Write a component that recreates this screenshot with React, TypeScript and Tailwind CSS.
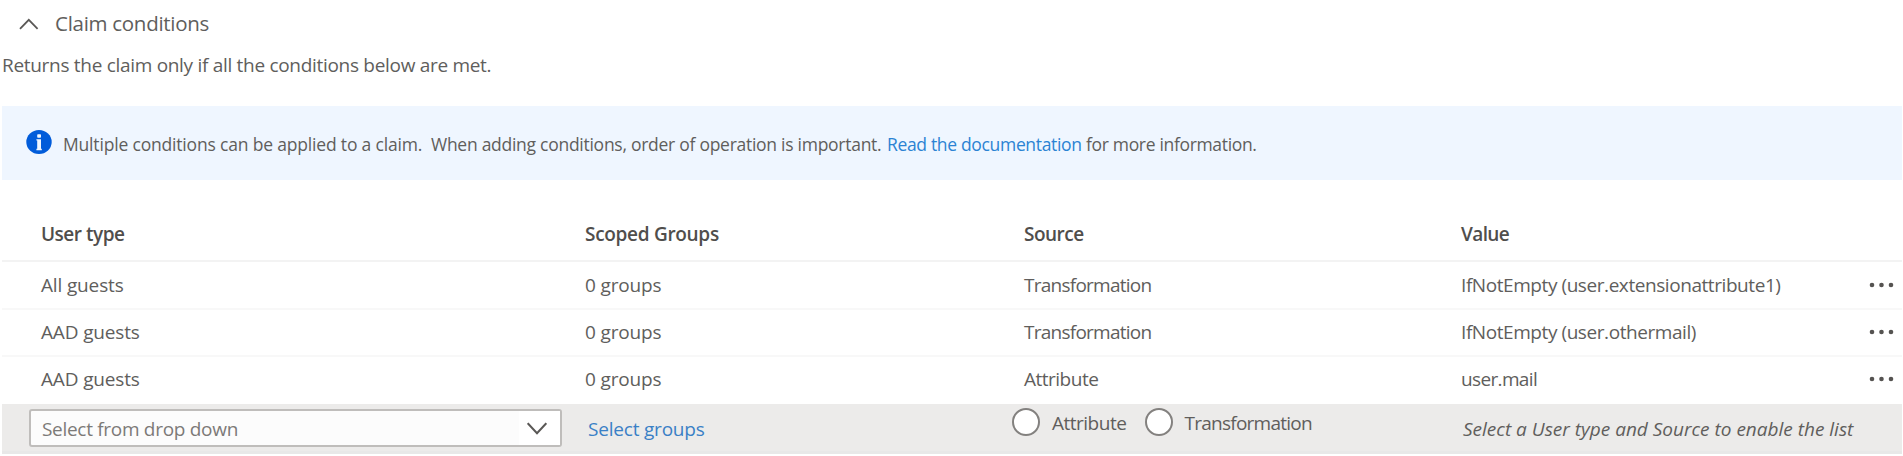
import type { ReactNode } from 'react';

const grid = 'grid grid-cols-[544px_439px_437px_1fr] pl-[39px]';

type Cell = { text: string; className: string };
type RowData = { user: Cell; groups: string; source: Cell; value: Cell };

const rows: RowData[] = [
  {
    user: { text: 'All guests', className: 'tracking-[-0.15px]' },
    groups: '0 groups',
    source: { text: 'Transformation', className: 'tracking-[-0.75px]' },
    value: { text: 'IfNotEmpty (user.extensionattribute1)', className: 'tracking-[-0.43px]' },
  },
  {
    user: { text: 'AAD guests', className: 'tracking-[-0.15px]' },
    groups: '0 groups',
    source: { text: 'Transformation', className: 'tracking-[-0.75px]' },
    value: { text: 'IfNotEmpty (user.othermail)', className: 'tracking-[-0.43px]' },
  },
  {
    user: { text: 'AAD guests', className: 'tracking-[-0.15px]' },
    groups: '0 groups',
    source: { text: 'Attribute', className: 'tracking-[-0.5px]' },
    value: { text: 'user.mail', className: 'tracking-[-0.65px]' },
  },
];

function MoreButton() {
  return (
    <button className="mt-[9px] mr-[6px] h-[10px] w-[28px]" aria-label="More">
      <svg width="28" height="10" viewBox="0 0 28 10" fill="#555351" className="block">
        <circle cx="4" cy="5" r="2.3" />
        <circle cx="13.5" cy="5" r="2.3" />
        <circle cx="23" cy="5" r="2.3" />
      </svg>
    </button>
  );
}

function Row({ row, className }: { row: RowData; className: string }) {
  return (
    <div className={`${grid} border-[#f8f8f8] ${className}`}>
      <span className={row.user.className}>{row.user.text}</span>
      <span className="tracking-[-0.15px]">{row.groups}</span>
      <span className={row.source.className}>{row.source.text}</span>
      <div className="flex items-start justify-between">
        <span className={row.value.className}>{row.value.text}</span>
        <MoreButton />
      </div>
    </div>
  );
}

function Radio({ label, className }: { label: ReactNode; className: string }) {
  return (
    <label className={`flex items-center ${className}`}>
      <span className="mr-[12px] size-[28px] shrink-0 rounded-full border-2 border-[#83817f] bg-white" />
      <span className="mt-[2px]">{label}</span>
    </label>
  );
}

export default function App() {
  return (
    <main className="h-[456px] w-full overflow-hidden bg-white pr-px pl-[2px] font-['Open_Sans',sans-serif] text-[19px] leading-[28px] whitespace-nowrap text-[#605e5c]">
      <header className="flex h-[48px] items-start pt-[9px]">
        <svg width="20" height="12" viewBox="0 0 20 12" fill="none" stroke="#5a5856" strokeWidth="1.8" className="mt-[9px] ml-[17px]">
          <path d="M1 10.8 L9.8 1.8 L18.6 10.8" />
        </svg>
        <h2 className="ml-[16px] text-[20.5px] tracking-[-0.28px]">Claim conditions</h2>
      </header>
      <p className="h-[58px] pt-[3px] tracking-[-0.3px]">Returns the claim only if all the conditions below are met.</p>

      <section className="flex h-[74px] items-start bg-[#eff6ff] pt-[24px] pl-[24px] text-[17.5px]">
        <svg width="26" height="24" viewBox="0 0 26 24" className="shrink-0">
          <ellipse cx="13" cy="12" rx="12.7" ry="12" fill="#015cda" />
          <rect x="11.2" y="4.2" width="3.8" height="3.6" rx="0.8" fill="#eff6ff" />
          <path d="M10.4 9.2h4.6v9.6h0.8v1.4h-5.4v-1.4h0.8v-8.2h-0.8z" fill="#eff6ff" />
        </svg>
        <p className="flex pl-[11px]">
          <span className="w-[368px] tracking-[-0.18px]">Multiple conditions can be applied to a claim.</span>
          <span className="w-[456px] tracking-[-0.27px]">When adding conditions, order of operation is important.</span>
          <a className="w-[199px] tracking-[-0.33px] text-[#2b83d3]">Read the documentation</a>
          <span className="tracking-[-0.33px]">for more information.</span>
        </p>
      </section>

      <div className={`${grid} h-[82px] border-b-2 border-[#f3f3f3] pt-[40px] font-semibold text-[#504e4c]`}>
        <span className="tracking-[-0.5px]">User type</span>
        <span className="tracking-[-0.3px]">Scoped Groups</span>
        <span className="tracking-[-0.5px]">Source</span>
        <span className="tracking-[-0.6px]">Value</span>
      </div>
      <Row row={rows[0]} className="h-[48px] border-b-2 pt-[9px]" />
      <Row row={rows[1]} className="h-[47px] border-b-2 pt-[8px]" />
      <Row row={rows[2]} className="h-[47px] pt-[8px]" />

      <div className="flex h-[50px] border-b-[3px] border-[#e8e8e8] bg-[#ecebea]">
        <div className="mt-[5px] ml-[27px] flex h-[38px] w-[533px] items-center justify-between rounded-[3px] border-2 border-[#bfbdbb] bg-[#fcfcfc] pl-[11px]">
          <span className="mt-px tracking-[-0.3px] text-[#7c7a78]">Select from drop down</span>
          <span className="flex h-full w-[41px] items-center bg-white pl-[8px]">
            <svg width="20" height="13" viewBox="0 0 20 13" fill="none" stroke="#5a5856" strokeWidth="2">
              <path d="M0.7 1.2 L10 11.2 L19.3 1.2" />
            </svg>
          </span>
        </div>
        <a className="mt-[11px] ml-[26px] w-[424px] tracking-[-0.2px] text-[#3a80c6]">Select groups</a>
        <div className="mt-[3px] flex h-[30px] w-[448px]">
          <Radio className="w-[132.5px] tracking-[-0.5px]" label="Attribute" />
          <Radio className="tracking-[-0.75px]" label="Transformation" />
        </div>
        <em className="mt-[11px] ml-[3px]">Select a User type and Source to enable the list</em>
      </div>
    </main>
  );
}
